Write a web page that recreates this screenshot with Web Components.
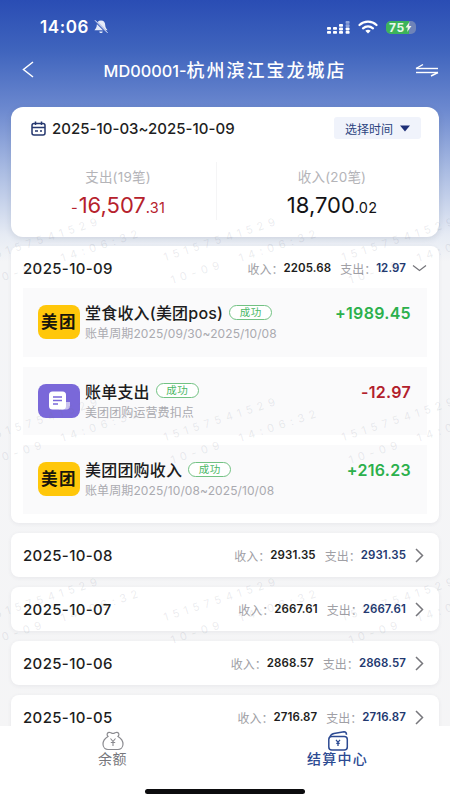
<!DOCTYPE html>
<html lang="zh"><head><meta charset="utf-8"><title>结算中心</title>
<style>
html,body{margin:0;padding:0;background:#f5f5f6}
body{font-family:Inter,"Noto Sans CJK SC",sans-serif;color:#1b1b1f}
</style></head><body>
<app-screen>
  <status-bar slot="top"></status-bar>
  <nav-bar slot="top" code="MD00001-" store="杭州滨江宝龙城店"></nav-bar>
  <summary-card slot="top"></summary-card>
  <day-detail date="2025-10-09" income="2205.68" expense="12.97">
    <bill-item brand="meituan" name="堂食收入(美团pos)" sub="账单周期2025/09/30~2025/10/08" amount="+1989.45"></bill-item>
    <bill-item brand="bill" name="账单支出" sub="美团团购运营费扣点" amount="-12.97" neg></bill-item>
    <bill-item brand="meituan" name="美团团购收入" sub="账单周期2025/10/08~2025/10/08" amount="+216.23"></bill-item>
  </day-detail>
  <day-row date="2025-10-08" income="2931.35" expense="2931.35"></day-row>
  <day-row date="2025-10-07" income="2667.61" expense="2667.61"></day-row>
  <day-row date="2025-10-06" income="2868.57" expense="2868.57"></day-row>
  <day-row date="2025-10-05" income="2716.87" expense="2716.87"></day-row>
  <water-mark slot="over"></water-mark>
  <tab-bar slot="bottom"></tab-bar>
</app-screen>
<script>
const FONT='Inter,"Noto Sans CJK SC",sans-serif';
function def(name,html,init){
  customElements.define(name,class extends HTMLElement{
    connectedCallback(){
      if(this.shadowRoot)return;
      const a=k=>this.getAttribute(k)||'';
      const r=this.attachShadow({mode:'open'});
      r.innerHTML=typeof html==='function'?html(a,this):html;
      if(init)init(r,this);
    }
  });
}
def('app-screen',`<style>
:host{display:flex;flex-direction:column;position:relative;width:450px;height:800px;overflow:hidden;
background:linear-gradient(180deg,#2a4db4 0,#3f64bd 50px,#6b88cf 108px,#a9bbe2 170px,#e6ebf4 235px,#f4f5f7 262px,#f5f5f6 100%);}
.top{flex:none}
.list{flex:1;min-height:0;overflow:hidden;padding:9px 11px 0;display:flex;flex-direction:column;gap:10px}
.bottom{flex:none;position:relative;z-index:2}
</style>
<div class="top"><slot name="top"></slot></div>
<div class="list"><slot></slot></div>
<slot name="over"></slot>
<div class="bottom"><slot name="bottom"></slot></div>`);

def('status-bar',`<style>
:host{display:flex;align-items:center;height:54px;box-sizing:border-box;padding:0 34px 0 40px;color:#fff;font-family:${FONT}}
.t{font-size:17px;font-weight:600;letter-spacing:.6px;line-height:20px}
.bell{margin-left:4px}
.sp{flex:1}
.sig{margin-right:8px}.wifi{margin-right:8px}
.bat{position:relative;width:30px;height:13px;border-radius:5px;background:#6e83b8;overflow:hidden;display:flex;align-items:center}
.fill{position:absolute;left:0;top:0;bottom:0;width:23px;background:#3cb45a}
.n{position:relative;font-size:12px;font-weight:700;color:#e8f7ea;margin-left:3px;letter-spacing:.6px;line-height:13px}
.bolt{position:relative;margin-left:0}
</style>
<span class="t">14:06</span>
<svg class="bell" width="16" height="16" viewBox="0 0 16 16"><path d="M8 1.500c-2.800 0-4.200 2-4.200 4.500 0 2.800-1.600 3.800-2.300 5.300h13c-.7-1.500-2.300-2.500-2.300-5.300 0-2.500-1.400-4.500-4.200-4.500z" fill="#e6ebf8"/><path d="M6.300 12.400h3.400c0 2-3.400 2-3.400 0z" fill="#e6ebf8"/><path d="M2.200 2l12 12" stroke="#3a5cba" stroke-width="2"/><path d="M2 1.300l12.500 12.500" stroke="#eef2fb" stroke-width="1"/></svg>
<span class="sp"></span>
<svg class="sig" width="23" height="13" viewBox="0 0 23 13" fill="#fff"><rect x="0" y="6" width="4" height="2.800" rx=".8"/><rect x="0" y="10" width="4" height="2.800" rx=".8"/><rect x="6" y="6" width="4" height="2.800" rx=".8"/><rect x="6" y="10" width="4" height="2.800" rx=".8"/><rect x="12" y="3" width="4" height="2.800" rx=".8"/><rect x="12" y="6.600" width="4" height="2.800" rx=".8"/><rect x="12" y="10" width="4" height="2.800" rx=".8"/><g fill="#8fa5dc"><rect x="18.600" y="0" width="4" height="2.800" rx=".8"/><rect x="18.600" y="3.300" width="4" height="2.800" rx=".8"/></g><rect x="18.600" y="6.600" width="4" height="2.800" rx=".8"/><rect x="18.600" y="10" width="4" height="2.800" rx=".8"/></svg>
<svg class="wifi" width="20" height="14" viewBox="0 0 20 14" fill="none" stroke="#fff" stroke-linecap="round"><path d="M1.500 5C6.200 .6 13.800 .6 18.500 5" stroke-width="2.200"/><path d="M5 8.400c3-2.600 7-2.600 10 0" stroke-width="2.200"/><path d="M10 13.400l-2.700-2.700c1.600-1.200 3.800-1.200 5.400 0z" fill="#fff" stroke="none"/></svg>
<span class="bat"><span class="fill"></span><span class="n">75</span><svg class="bolt" width="7" height="10" viewBox="0 0 7 10"><path d="M4.500 0L.5 5.600h2.300L2.200 10l4.300-6H4z" fill="#eef5ea"/></svg></span>`);

def('nav-bar',a=>`<style>
:host{display:flex;align-items:center;height:31px;padding:0 11px 0 22px;color:#fff;font-family:${FONT}}
h1{flex:1;margin:0;text-align:center;font-size:18px;font-weight:500;letter-spacing:2px;white-space:nowrap;padding-left:1px;transform:translateY(-1px)}
h1 span{font-size:16.300px;letter-spacing:0}
</style>
<svg width="12" height="17" viewBox="0 0 12 17" fill="none"><path d="M11 1L1.500 8.500 11 16" stroke="#fff" stroke-width="1.500"/></svg>
<h1><span>${a('code')}</span>${a('store')}</h1>
<svg width="24" height="14" viewBox="0 0 24 14" fill="none" stroke="#fff" stroke-width="1.400"><path d="M1 5.500H23"/><path d="M1 5.500L8 1.500"/><path d="M1 9.500H23"/><path d="M23 9.500L16 13"/></svg>`);

def('summary-card',`<style>
:host{display:block;margin:22px 11px 0;height:130px;box-sizing:border-box;background:#fff;border-radius:12px;box-shadow:0 2px 6px rgba(60,70,100,.14);font-family:${FONT};padding:10px 18px 0 20px}
.r{display:flex;align-items:center;height:22px}
.d{margin-left:6px;font-size:15px;font-weight:500;letter-spacing:.02px;color:#1e1e22;white-space:nowrap}
.sp{flex:1}
.btn{display:flex;align-items:center;gap:7px;height:22px;width:87px;box-sizing:border-box;padding:0 11px;border-radius:3px;background:#f0f3fb;color:#2c4480;font-size:12px;letter-spacing:0;white-space:nowrap}
.stats{display:grid;grid-template-columns:1fr 1fr;margin:29px -18px 0 -20px}
.c{display:flex;flex-direction:column;align-items:center}
.c+.c{position:relative}
.c+.c::before{content:"";position:absolute;left:-9px;top:-6px;bottom:2px;width:1px;background:#f5f5f6}
.l{font-size:13.500px;color:#b4b4b8;letter-spacing:.2px;line-height:18px}
.v{font-size:22px;line-height:28px;margin-top:5px;color:#131316;font-weight:400;white-space:nowrap;letter-spacing:0}
.v small{font-size:14.500px;letter-spacing:.2px}
.v b{font-weight:400;font-size:14.500px;margin-right:1px}
.neg{color:#b6212c}
</style>
<div class="r"><svg width="15" height="15" viewBox="0 0 15 15" fill="none" stroke="#26386f" stroke-width="1.500"><rect x="1" y="2.500" width="13" height="11.500" rx="2"/><path d="M1 6.500h13M4.500 .5v3.500M10.500 .5v3.500"/><path d="M4 10h3M9 10h2"/></svg>
<span class="d">2025-10-03~2025-10-09</span><span class="sp"></span>
<span class="btn">选择时间<svg width="10" height="7" viewBox="0 0 10 7"><path d="M0 .5h10L5 6.500z" fill="#1d2f78"/></svg></span></div>
<div class="stats"><div class="c"><span class="l">支出(19笔)</span><span class="v neg"><b>-</b>16,507<small>.31</small></span></div>
<div class="c"><span class="l">收入(20笔)</span><span class="v">18,700<small>.02</small></span></div></div>`);

const totals=(a)=>`<span class="k">收入：</span><span class="a">${a('income')}</span><span class="k e">支出：</span><span class="a x">${a('expense')}</span>`;
const rowCss=`
.date{font-size:15px;font-weight:500;letter-spacing:.35px;color:#1d1d20;white-space:nowrap}
.sp{flex:1}
.k{font-size:12px;color:#a0a0a5;white-space:nowrap}
.e{margin-left:9px}
.a{font-size:11.500px;font-weight:600;color:#1d1d20;white-space:nowrap;letter-spacing:.1px}
.x{color:#22386f}`;

def('day-detail',a=>`<style>
:host{display:block;flex:none;height:277px;box-sizing:border-box;background:#fff;border-radius:8px;box-shadow:0 1px 4px rgba(60,60,80,.07);padding:0 12px;font-family:${FONT}}
.h{display:flex;align-items:center;height:42px;padding-top:2px;box-sizing:border-box}
svg{margin-left:6px}
.b{display:flex;flex-direction:column;gap:10px}
${rowCss}
</style>
<div class="h"><span class="date">${a('date')}</span><span class="sp"></span>${totals(a)}<svg width="15" height="8" viewBox="0 0 15 8" fill="none"><path d="M1 1.500L7.500 6.500 14 1.500" stroke="#74747a" stroke-width="1.200"/></svg></div>
<div class="b"><slot></slot></div>`);

def('day-row',a=>`<style>
:host{display:flex;align-items:center;flex:none;height:44px;box-sizing:border-box;background:#fff;border-radius:8px;box-shadow:0 1px 4px rgba(60,60,80,.07);padding:0 15px 0 12px;font-family:${FONT}}
svg{margin-left:9px}
${rowCss}
</style>
<span class="date">${a('date')}</span><span class="sp"></span>${totals(a)}
<svg width="9" height="15" viewBox="0 0 9 15" fill="none"><path d="M1 1l6.500 6.500L1 14" stroke="#77777c" stroke-width="1.500"/></svg>`);

def('brand-icon',a=>{
  const doc=a('kind')==='bill';
  return `<style>
:host{display:flex;align-items:center;justify-content:center;flex:none;width:42px;height:34px;border-radius:8px;background:${doc?'#7a68d9':'#ffc70a'};color:#17150c;font:700 16.500px/34px ${FONT};letter-spacing:1.500px}
</style>${doc?`<svg width="26" height="22" viewBox="0 0 26 22"><path d="M17 12h7v3.500c0 2.400-1.600 4-3.500 4H13z" fill="#c9c2ef"/><rect x="3" y="1.500" width="17" height="18" rx="3.500" fill="#fff"/><path d="M7 7h9M7 10.500h9M7 14h5" stroke="#7a68d9" stroke-width="1.500"/></svg>`:'<slot>美团</slot>'}`;
});

def('status-tag',`<style>
:host{display:inline-flex;align-items:center;justify-content:center;flex:none;width:43px;height:15px;box-sizing:border-box;border:1px solid #72c283;border-radius:8px;color:#4bb766;font:10.500px/13px ${FONT};background:#fff;letter-spacing:.5px}
</style><slot>成功</slot>`);

def('bill-item',a=>`<style>
:host{display:flex;align-items:center;height:68.500px;box-sizing:border-box;padding:0 16px 0 15px;background:#fafafb;font-family:${FONT}}
.m{margin-left:5px;display:flex;flex-direction:column;min-width:0}
.t{display:flex;align-items:center;gap:6px;height:20px;transform:translateY(-1px)}
.n{font-size:16px;font-weight:500;color:#1c1c20;letter-spacing:.2px;white-space:nowrap}
.s{font-size:12px;line-height:16px;margin-top:2px;color:#aaaab0;white-space:nowrap;letter-spacing:.1px;transform:translateY(1px)}
.sp{flex:1}
.v{font-size:16px;font-weight:600;color:#2cb04c;white-space:nowrap;letter-spacing:.3px;transform:translateY(-9px)}
:host([neg]) .v{color:#b2202b}
</style>
<brand-icon kind="${a('brand')}"></brand-icon>
<div class="m"><div class="t"><span class="n">${a('name')}</span><status-tag></status-tag></div><div class="s">${a('sub')}</div></div>
<span class="sp"></span><span class="v">${a('amount')}</span>`);

def('water-mark',`<style>
:host{position:absolute;inset:0;pointer-events:none;z-index:1;overflow:hidden;font-family:${FONT}}
.w{position:absolute;transform-origin:0 0;transform:rotate(-18deg);color:rgba(110,115,135,.14);font-size:11px;line-height:24px;letter-spacing:5px;white-space:nowrap}
</style><div id="h"></div>`,r=>{
  const h=r.getElementById('h');let s='';
  for(const y of [258,438,618]) for(const x of [-18,160,338])
    s+=`<div class="w" style="left:${x}px;top:${y-12}px">15157541529<br>10-09&nbsp;&nbsp;14:06:32</div>`;
  h.innerHTML=s;
});

def('tab-bar',`<style>
:host{display:block;height:74px;background:#fff;font-family:${FONT};position:relative}
.g{display:grid;grid-template-columns:1fr 1fr;padding-top:5px;height:58px;box-sizing:border-box}
.i{display:flex;flex-direction:column;align-items:center;font-size:14px;line-height:18px;color:#77777c;letter-spacing:.6px}
.i span{margin-top:-1px}
.on{color:#2c4a92;font-weight:500;letter-spacing:1.200px}
svg{display:block}
.home{width:160px;height:5px;border-radius:3px;background:#0c0c0e;margin:5px auto 0}
</style>
<div class="g"><div class="i"><svg width="24" height="20" viewBox="0 0 24 20" fill="none" stroke="#8a8a8f" stroke-width="1.200"><path d="M7 5.500C5 3.500 6.500 1 9 1.500c1.500.3 2 1 3 1s1.500-.7 3-1c2.500-.5 4 2 2 4 2.500 1.500 5 4 5 7.500 0 3.500-2.500 5.500-5 5.500H7c-2.500 0-5-2-5-5.500 0-3.500 2.500-6 5-7.500z"/><path d="M9.500 7.500L12 10.500l2.500-3M12 10.500v4.500M9.800 11.500h4.400" stroke-width="1.100"/></svg><span>余额</span></div>
<div class="i on"><svg width="24" height="20" viewBox="0 0 24 20" fill="none" stroke="#2c4a92" stroke-width="1.500"><path d="M4 6C4.500 3.500 6 3 8 2.500l10-1.700c1.500 0 2.500 1 2.500 3"/><rect x="2.800" y="5.500" width="18.500" height="13.500" rx="3"/><path d="M10 8.800l2 2.500 2-2.500M12 11.300V15M10.300 12.300h3.400" stroke-width="1.300"/></svg><span>结算中心</span></div></div>
<div class="home"></div>`);
</script>
</body></html>
